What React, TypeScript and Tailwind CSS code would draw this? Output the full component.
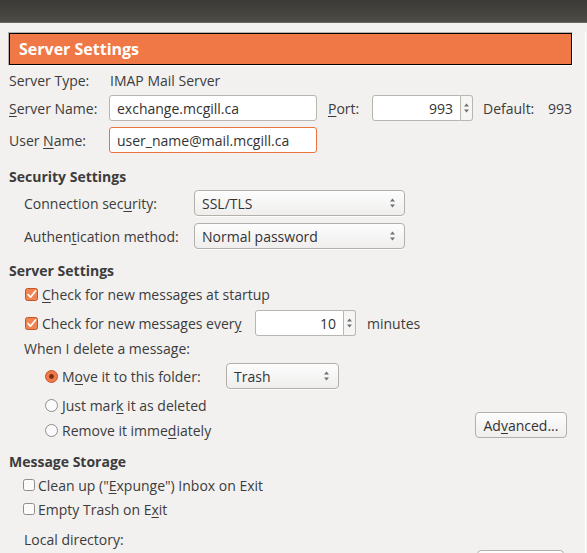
import React from 'react';

const ink = 'text-[#3c3c3c]';

function UpDown() {
  return (
    <svg width="7" height="12" viewBox="0 0 7 12">
      <path d="M3.5 1.5 L6 4.5 L1 4.5 Z" fill="#6f6f6f" />
      <path d="M3.5 10.5 L6 7.5 L1 7.5 Z" fill="#6f6f6f" />
    </svg>
  );
}

function Spin({ value }: { value: string }) {
  return (
    <div className="flex h-[26px]">
      <div className="flex w-[89px] items-center justify-end rounded-l-[3px] border border-[#b9b6b1] bg-white pr-[7px] text-[#333]">
        {value}
      </div>
      <div className="flex w-[12px] items-center justify-center rounded-r-[3px] border border-l-0 border-[#b9b6b1] bg-[#f6f5f4]">
        <UpDown />
      </div>
    </div>
  );
}

function Select({ value, w }: { value: string; w: string }) {
  return (
    <div
      className={`${w} flex h-[26px] items-center justify-between rounded-[4px] border border-[#b3b0ab] bg-gradient-to-b from-[#fdfdfd] to-[#efeeed] pl-[7px] pr-[8px] text-[#333] shadow-[0_1px_0_rgba(255,255,255,0.8)]`}
    >
      <span>{value}</span>
      <UpDown />
    </div>
  );
}

function Check({ on }: { on?: boolean }) {
  return on ? (
    <svg width="13" height="13" viewBox="0 0 13 13" className="shrink-0">
      <rect x="0.5" y="0.5" width="12" height="12" rx="2" fill="#f08352" stroke="#c2562a" />
      <path d="M3 6.5 L5.5 9.2 L10.5 3" fill="none" stroke="#ffffff" strokeWidth="1.7" strokeLinecap="round" strokeLinejoin="round" />
    </svg>
  ) : (
    <svg width="12" height="12" viewBox="0 0 12 12" className="shrink-0">
      <rect x="0.5" y="0.5" width="11" height="11" rx="2" fill="#fbfbfb" stroke="#8f8d89" />
    </svg>
  );
}

function Radio({ on }: { on?: boolean }) {
  return on ? (
    <svg width="13" height="13" viewBox="0 0 13 13" className="shrink-0">
      <circle cx="6.5" cy="6.5" r="6" fill="#ef7a4c" stroke="#c2562a" />
      <circle cx="6.5" cy="6.5" r="2.4" fill="#7a2e12" />
    </svg>
  ) : (
    <svg width="13" height="13" viewBox="0 0 13 13" className="shrink-0">
      <circle cx="6.5" cy="6.5" r="6" fill="#fbfbfb" stroke="#8f8d89" />
    </svg>
  );
}

function Heading({ children, cls }: { children: React.ReactNode; cls: string }) {
  return <div className={`${cls} flex h-[24px] items-center pl-[9px] font-bold ${ink}`}>{children}</div>;
}

export default function App() {
  return (
    <div className={`h-[553px] w-[587px] overflow-hidden bg-[#f2f1f0] font-['Open_Sans',sans-serif] text-[14px] ${ink}`}>
      <div className="h-[23px] bg-gradient-to-b from-[#3b3a36] to-[#4d4b46] border-b border-[#6a6863]" />

      <div className="border-r border-white w-[586px]">
        {/* header */}
        <div className="ml-[8px] mt-[9px] w-[565px] border border-t-[#b4b1ac] border-l-[#b4b1ac] border-b-white border-r-white">
          <div className="flex h-[32px] items-center border border-black bg-[#f07746] pl-[9px] text-[16px] font-bold text-white">
            Server Settings
          </div>
        </div>

        <div className="flex h-[29px] items-center pl-[9px]">
          <span className="w-[101px]">Server Type:</span>
          <span>IMAP Mail Server</span>
        </div>

        <div className="flex h-[26px] items-center pl-[9px]">
          <span className="w-[100px]">
            <u className="underline-offset-2">S</u>erver Name:
          </span>
          <div className="flex h-[26px] w-[208px] items-center rounded-[3px] border border-[#b9b6b1] bg-white pl-[7px] text-[#333]">
            exchange.mcgill.ca
          </div>
          <span className="ml-[11px] w-[44px]">
            <u className="underline-offset-2">P</u>ort:
          </span>
          <Spin value="993" />
          <span className="ml-[10px] w-[65px]">Default:</span>
          <span>993</span>
        </div>

        <div className="mt-[6px] flex h-[26px] items-center pl-[9px]">
          <span className="w-[100px]">
            User <u className="underline-offset-2">N</u>ame:
          </span>
          <div className="flex h-[26px] w-[208px] items-center rounded-[3px] border border-[#e8733f] bg-white pl-[7px] text-[#333]">
            user_name@mail.mcgill.ca
          </div>
        </div>

        <Heading cls="mt-[11px]">Security Settings</Heading>

        <div className="mt-[2px] flex h-[26px] items-center pl-[24px]">
          <span className="w-[170px]">
            Connection sec<u className="underline-offset-2">u</u>rity:
          </span>
          <Select value="SSL/TLS" w="w-[211px]" />
        </div>

        <div className="mt-[7px] flex h-[26px] items-center pl-[24px]">
          <span className="w-[170px]">
            Authen<u className="underline-offset-2">t</u>ication method:
          </span>
          <Select value="Normal password" w="w-[211px]" />
        </div>

        <Heading cls="mt-[9px]">Server Settings</Heading>

        <div className="flex h-[24px] items-center pl-[25px]">
          <Check on />
          <span className="ml-[4px]">
            <u className="underline-offset-2">C</u>heck for new messages at startup
          </span>
        </div>

        <div className="mt-[4px] flex h-[26px] items-center pl-[25px]">
          <Check on />
          <span className="ml-[4px] w-[213px]">
            Check for new messages ever<u className="underline-offset-2">y</u>
          </span>
          <Spin value="10" />
          <span className="ml-[11px]">minutes</span>
        </div>

        <div className="flex h-[24px] items-center pl-[24px]">When I delete a message:</div>

        <div className="mt-[3px] flex h-[26px] items-center pl-[45px]">
          <Radio on />
          <span className="ml-[4px] w-[164px]">
            M<u className="underline-offset-2">o</u>ve it to this folder:
          </span>
          <Select value="Trash" w="w-[113px]" />
        </div>

        <div className="mt-[4px] flex items-start">
          <div className="flex w-[475px] flex-col pl-[45px]">
            <div className="flex h-[24px] items-center">
              <Radio />
              <span className="ml-[4px]">
                Just mar<u className="underline-offset-2">k</u> it as deleted
              </span>
            </div>
            <div className="mt-[1px] flex h-[24px] items-center">
              <Radio />
              <span className="ml-[4px]">
                Remove it imme<u className="underline-offset-2">d</u>iately
              </span>
            </div>
          </div>
          <div className="mt-[19px] flex h-[26px] w-[92px] items-center justify-center rounded-[4px] border border-[#b3b0ab] bg-gradient-to-b from-[#fdfdfd] to-[#efeeed] text-[#333]">
            Ad<u className="underline-offset-2">v</u>anced...
          </div>
        </div>

        <Heading cls="mt-[7px]">Message Storage</Heading>

        <div className="flex h-[24px] items-center pl-[23px]">
          <Check />
          <span className="ml-[3px]">
            Clean up ("<u className="underline-offset-2">E</u>xpunge") Inbox on Exit
          </span>
        </div>

        <div className="flex h-[24px] items-center pl-[23px]">
          <Check />
          <span className="ml-[3px]">
            Empty Trash on E<u className="underline-offset-2">x</u>it
          </span>
        </div>

        <div className="mt-[7px] flex h-[22px] items-center pl-[24px]">Local directory:</div>

        <div className="flex pl-[477px]">
          <div className="h-[26px] w-[87px] rounded-[4px] border border-[#b3b0ab] bg-gradient-to-b from-[#fdfdfd] to-[#efeeed]" />
        </div>
      </div>
    </div>
  );
}
